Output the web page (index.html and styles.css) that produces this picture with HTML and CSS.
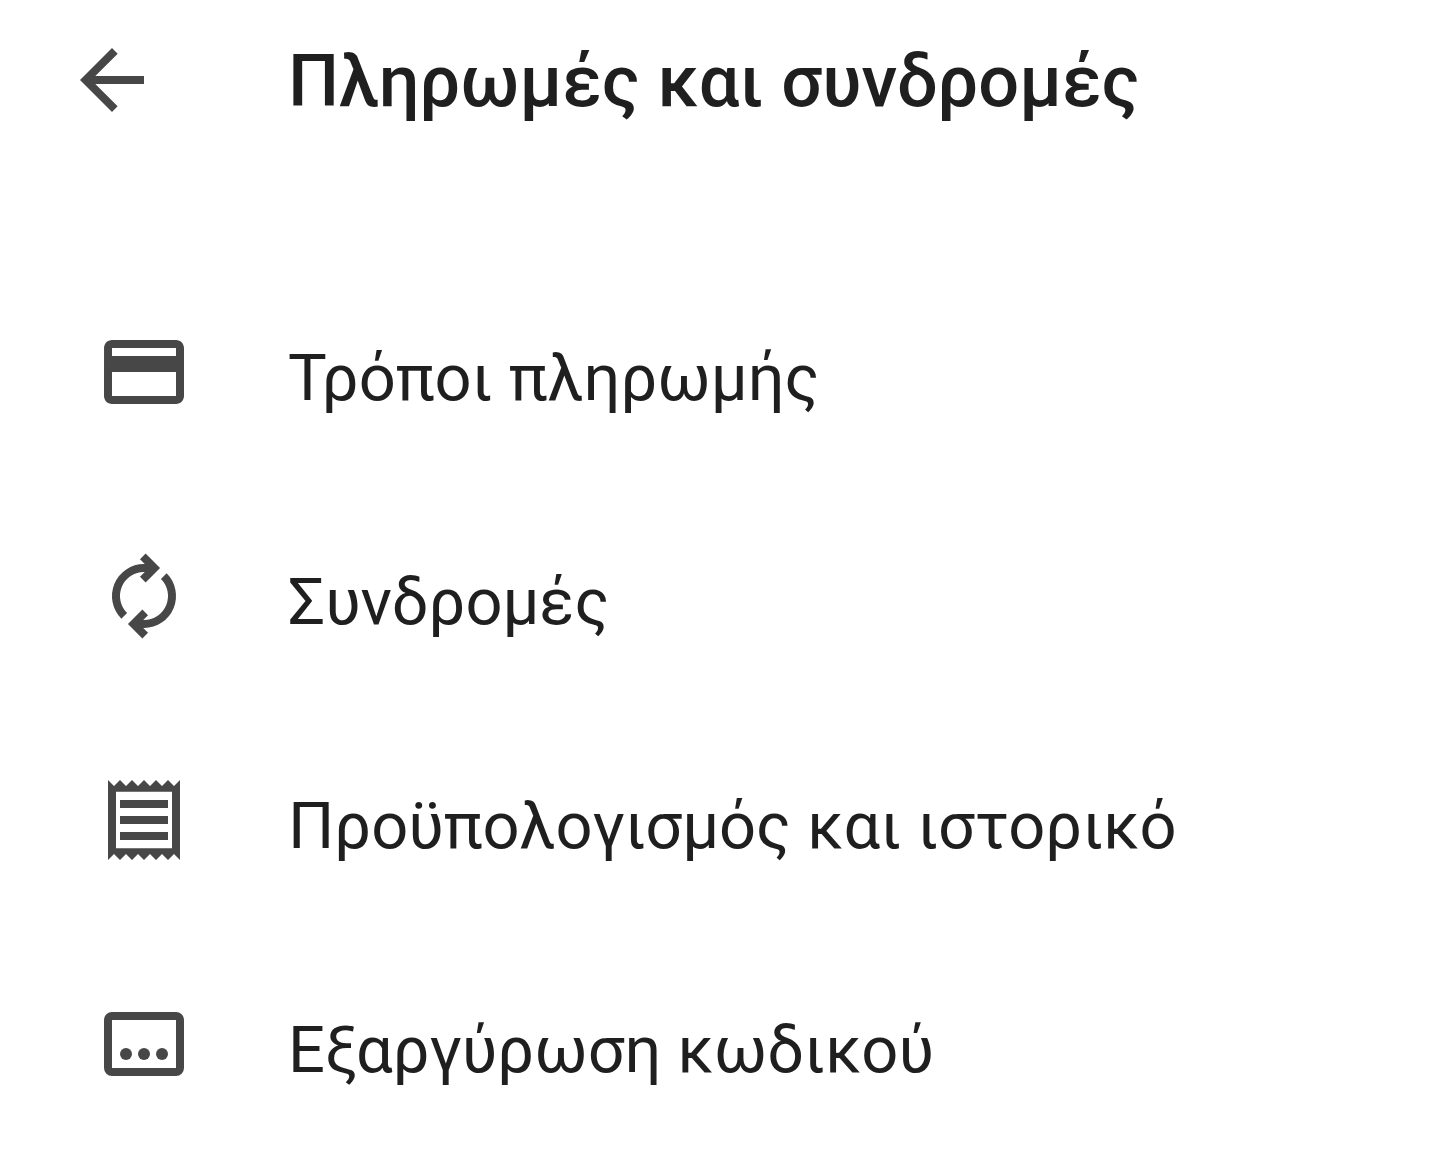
FILE: index.html
```html
<!DOCTYPE html>
<html lang="el">
<head>
    <meta charset="UTF-8">
    <meta name="viewport" content="width=device-width, initial-scale=1.0">
    <title>Πληρωμές και συνδρομές</title>
    <link rel="stylesheet" href="styles.css">
</head>
<body>
    <header class="top-bar">
        <button class="back-button" type="button" aria-label="Πίσω">
            <svg class="icon" viewBox="0 0 24 24"><path d="M20 11H7.830l5.590-5.590L12 4l-8 8 8 8 1.410-1.410L7.830 13H20z"/></svg>
        </button>
        <h1 class="title">Πληρωμές και συνδρομές</h1>
    </header>

    <nav class="menu">
        <a class="menu-item" href="#payment-methods">
            <svg class="icon" viewBox="0 0 24 24"><path d="M20 4H4c-1.110 0-1.990.890-1.990 2L2 18c0 1.110.890 2 2 2h16c1.110 0 2-.890 2-2V6c0-1.110-.890-2-2-2zm0 14H4v-6h16v6zm0-10H4V6h16v2z"/></svg>
            <span class="label">Τρόποι πληρωμής</span>
        </a>
        <a class="menu-item" href="#subscriptions">
            <svg class="icon icon-stroke" viewBox="0 0 24 24">
                <path d="M7.050 16.950A7 7 0 0 1 12 5H14M16.950 7.050A7 7 0 0 1 12 19H10"/>
                <path d="M11.700 2.100L14.600 5 11.700 7.900M12.300 16.100L9.400 19 12.300 21.900"/>
            </svg>
            <span class="label">Συνδρομές</span>
        </a>
        <a class="menu-item" href="#history">
            <svg class="icon" viewBox="0 0 24 24"><path d="M19.500 3.500L18 2l-1.500 1.500L15 2l-1.500 1.500L12 2l-1.500 1.500L9 2 7.500 3.500 6 2 4.500 3.500 3 2v20l1.500-1.500L6 22l1.500-1.500L9 22l1.500-1.500L12 22l1.500-1.500L15 22l1.500-1.500L18 22l1.500-1.500L21 22V2zM19 19.090H5V4.910h14zM6 15h12v2H6zM6 11h12v2H6zM6 7h12v2H6z"/></svg>
            <span class="label">Προϋπολογισμός και ιστορικό</span>
        </a>
        <a class="menu-item" href="#redeem">
            <svg class="icon" viewBox="0 0 24 24">
                <path fill-rule="evenodd" d="M4 4h16a2 2 0 0 1 2 2v12a2 2 0 0 1-2 2H4a2 2 0 0 1-2-2V6a2 2 0 0 1 2-2zM4 6v12h16V6z"/>
                <circle cx="7.500" cy="14.500" r="1.500"/>
                <circle cx="12" cy="14.500" r="1.500"/>
                <circle cx="16.500" cy="14.500" r="1.500"/>
            </svg>
            <span class="label">Εξαργύρωση κωδικού</span>
        </a>
    </nav>
</body>
</html>
```

FILE: styles.css
```css
* {
    box-sizing: border-box;
}

body {
    margin: 0;
    background-color: #fff;
    color: #1f1f1f;
    font-family: Roboto, Inter, sans-serif;
}

.top-bar {
    display: flex;
    align-items: center;
    gap: 128px;
    padding: 32px 64px;
    margin-bottom: 100px;
}

.back-button {
    display: flex;
    padding: 0;
    border: none;
    background: none;
    color: inherit;
    cursor: pointer;
}

.icon {
    flex: none;
    width: 96px;
    height: 96px;
    fill: #474747;
}

.icon-stroke {
    fill: none;
    stroke: #474747;
    stroke-width: 2;
}

.title {
    margin: 0;
    padding-top: 4px;
    font-size: 72px;
    font-weight: 500;
    line-height: 92px;
}

.menu-item {
    display: flex;
    align-items: center;
    gap: 96px;
    padding: 64px 96px;
    color: inherit;
    font-size: 65px;
    line-height: 84px;
    text-decoration: none;
}

.label {
    padding-top: 12px;
}
```
